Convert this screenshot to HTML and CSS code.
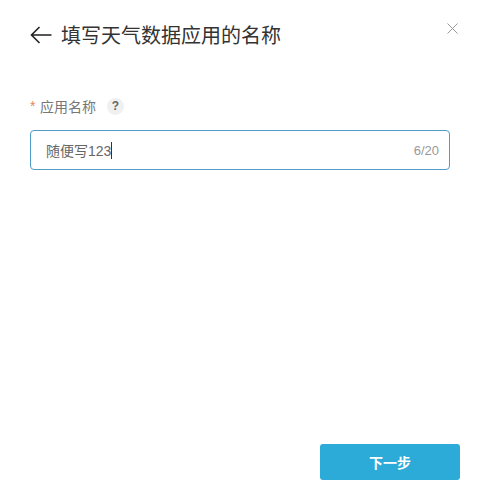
FILE: index.html
```html
<!DOCTYPE html>
<html lang="zh-CN">
<head>
  <meta charset="UTF-8">
  <title>填写天气数据应用的名称</title>
  <link rel="stylesheet" href="styles.css">
</head>
<body>
  <div class="dialog">
    <div class="dialog-head">
      <svg class="back" width="22" height="18" viewBox="0 0 22 18" fill="none" stroke="#222" stroke-width="1.6">
        <path d="M21.5 9H1.5M9.5 1L1.5 9l8 8"/>
      </svg>
      <h2>填写天气数据应用的名称</h2>
      <svg class="close" width="11" height="11" viewBox="0 0 11 11" fill="none" stroke="#999" stroke-width="1">
        <path d="M.5.5l10 10M10.5.5l-10 10"/>
      </svg>
    </div>

    <div class="field-label">
      <span class="star">*</span>
      <span class="label-text">应用名称</span>
      <span class="help">?</span>
    </div>

    <div class="input-box">
      <span class="value">随便写123</span><span class="caret"></span>
      <span class="count">6/20</span>
    </div>

    <div class="dialog-foot">
      <button type="button" class="next">下一步</button>
    </div>
  </div>
</body>
</html>
```

FILE: styles.css
```css
html, body {
  margin: 0;
  height: 100%;
  background: #fff;
}
body {
  font-family: "Liberation Sans", "Noto Sans CJK SC", sans-serif;
}
.dialog {
  box-sizing: border-box;
  height: 499px;
  padding: 22px 18px 19px 30px;
  display: flex;
  flex-direction: column;
}
.dialog-head {
  display: flex;
  align-items: center;
  height: 26px;
}
.back {
  flex: none;
  margin-right: 9px;
}
.dialog-head h2 {
  flex: 1;
  margin: 0;
  padding-top: 1px;
  font-size: 20px;
  font-weight: 400;
  color: #333;
  line-height: 26px;
}
.close {
  flex: none;
  margin: -13px 2px 0 0;
}
.field-label {
  display: flex;
  align-items: center;
  margin-top: 48px;
  height: 20px;
  font-size: 14px;
  color: #777;
}
.star {
  color: #e08a5c;
  margin-right: 3px;
  width: 7px;
}
.help {
  width: 17px;
  height: 17px;
  margin-left: 11px;
  border-radius: 50%;
  background: #f0f0f0;
  color: #666;
  font-size: 12px;
  font-weight: 700;
  line-height: 17px;
  text-align: center;
}
.input-box {
  box-sizing: border-box;
  display: flex;
  align-items: center;
  width: 420px;
  height: 40px;
  margin-top: 14px;
  padding: 0 10px 0 15px;
  border: 1px solid #4f9cc9;
  border-radius: 4px;
  font-size: 14px;
  color: #666;
}
.caret {
  width: 1px;
  height: 17px;
  background: #333;
}
.count {
  margin-left: auto;
  font-size: 13px;
  color: #999;
}
.dialog-foot {
  margin-top: auto;
  display: flex;
  justify-content: flex-end;
}
.next {
  width: 140px;
  height: 36px;
  padding: 0 0 1px;
  border: none;
  border-radius: 3px;
  background: #2dabd8;
  color: #fff;
  font-family: inherit;
  font-size: 14px;
  font-weight: 700;
}
```
